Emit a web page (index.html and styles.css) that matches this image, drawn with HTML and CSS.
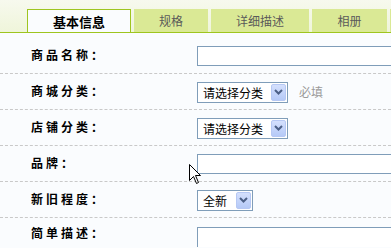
FILE: index.html
```html
<!DOCTYPE html>
<html lang="zh-CN">
<head>
<meta charset="utf-8">
<title>商品信息</title>
<link rel="stylesheet" href="styles.css">
</head>
<body>
<div class="tabs">
  <div class="tab active">基本信息</div>
  <div class="tab t2">规格</div>
  <div class="tab t3">详细描述</div>
  <div class="tab t4">相册</div>
  <div class="tab t5"></div>
</div>
<div class="form">
  <div class="row">
    <div class="label">商品名称：</div>
    <div class="field"><div class="input"></div></div>
  </div>
  <div class="row">
    <div class="label">商城分类：</div>
    <div class="field">
      <div class="select w-cat"><span class="stext">请选择分类</span><span class="arrow"><svg width="9" height="6" viewBox="0 0 9 6"><path d="M1 1 L4.5 4.5 L8 1" fill="none" stroke="#4b5f86" stroke-width="2"/></svg></span></div>
      <span class="hint">必填</span>
    </div>
  </div>
  <div class="row">
    <div class="label">店铺分类：</div>
    <div class="field">
      <div class="select w-cat"><span class="stext">请选择分类</span><span class="arrow"><svg width="9" height="6" viewBox="0 0 9 6"><path d="M1 1 L4.5 4.5 L8 1" fill="none" stroke="#4b5f86" stroke-width="2"/></svg></span></div>
    </div>
  </div>
  <div class="row">
    <div class="label">品牌：</div>
    <div class="field"><div class="input"></div></div>
  </div>
  <div class="row">
    <div class="label">新旧程度：</div>
    <div class="field">
      <div class="select w-new"><span class="stext">全新</span><span class="arrow"><svg width="9" height="6" viewBox="0 0 9 6"><path d="M1 1 L4.5 4.5 L8 1" fill="none" stroke="#4b5f86" stroke-width="2"/></svg></span></div>
    </div>
  </div>
  <div class="row last">
    <div class="label">简单描述：</div>
    <div class="field top"><div class="textarea"></div></div>
  </div>
</div>
<svg class="cursor" width="13" height="20" viewBox="0 0 13 20"><path d="M0.5 0.5 L0.5 16.5 L4.5 12.5 L7.5 19.5 L9.5 18.5 L6.5 11.5 L11.5 11.5 Z" fill="#fff" stroke="#000" stroke-width="1"/></svg>
</body>
</html>
```
FILE: styles.css
```css
html, body {
  margin: 0;
  padding: 0;
}
body {
  background: #fafcfe;
  font-family: "Noto Sans CJK SC", "Noto Sans", sans-serif;
  font-size: 12px;
  color: #000;
  width: 391px;
  height: 248px;
  overflow: hidden;
  position: relative;
}
.tabs {
  display: flex;
  align-items: flex-start;
  gap: 3px;
  height: 33px;
  padding: 9px 0 0 27px;
  box-sizing: border-box;
  background: linear-gradient(#f7f9ee, #eff5da);
  border-bottom: 1px solid #9ec51f;
  white-space: nowrap;
  overflow: hidden;
}
.tab {
  flex: none;
  box-sizing: border-box;
  height: 23px;
  background: #dae995;
  color: #5a5a5a;
  text-align: center;
  line-height: 23px;
}
.tab.active {
  width: 104px;
  height: 25px;
  background: #fafcfe;
  border: 1px solid #9ec51f;
  border-bottom: none;
  color: #000;
  font-weight: bold;
  font-size: 13px;
  line-height: 24px;
}
.t2 { width: 74px; }
.t3 { width: 98px; }
.t4 { width: 75px; }
.t5 { width: 2px; }
.form {
  padding-top: 5px;
}
.row {
  display: grid;
  grid-template-columns: 166px 1fr;
  height: 35px;
  align-items: center;
  border-bottom: 1px dashed #c9c9c9;
  padding-left: 31px;
}
.row.last {
  border-bottom: none;
  align-items: start;
  height: 29px;
}
.label {
  font-weight: bold;
  letter-spacing: 3px;
  margin-top: -2px;
}
.last .label {
  margin-top: 6px;
}
.field {
  display: flex;
  align-items: center;
  gap: 11px;
  white-space: nowrap;
}
.field.top {
  padding-top: 9px;
}
.input {
  width: 194px;
  height: 20px;
  box-sizing: border-box;
  border: 1px solid #7f9db9;
  border-right: none;
  background: #fff;
  margin-top: 1px;
}
.textarea {
  width: 194px;
  height: 20px;
  box-sizing: border-box;
  border: 1px solid #7f9db9;
  border-right: none;
  border-bottom: none;
  background: #fff;
}
.select {
  display: flex;
  align-items: center;
  justify-content: space-between;
  box-sizing: border-box;
  height: 21px;
  border: 1px solid #7f9db9;
  background: #fff;
  padding: 1px 1px 1px 5px;
  margin-top: 1px;
}
.w-cat { width: 91px; }
.w-new { width: 56px; }
.stext {
  line-height: 17px;
}
.arrow {
  display: flex;
  align-items: center;
  justify-content: center;
  width: 15px;
  height: 17px;
  box-sizing: border-box;
  border: 1px solid #b6c8f4;
  border-radius: 2px;
  background: linear-gradient(#d4e0fd, #b5c9f7);
}
.hint {
  color: #9a9a9a;
}
.cursor {
  position: absolute;
  left: 189px;
  top: 164px;
}
```
